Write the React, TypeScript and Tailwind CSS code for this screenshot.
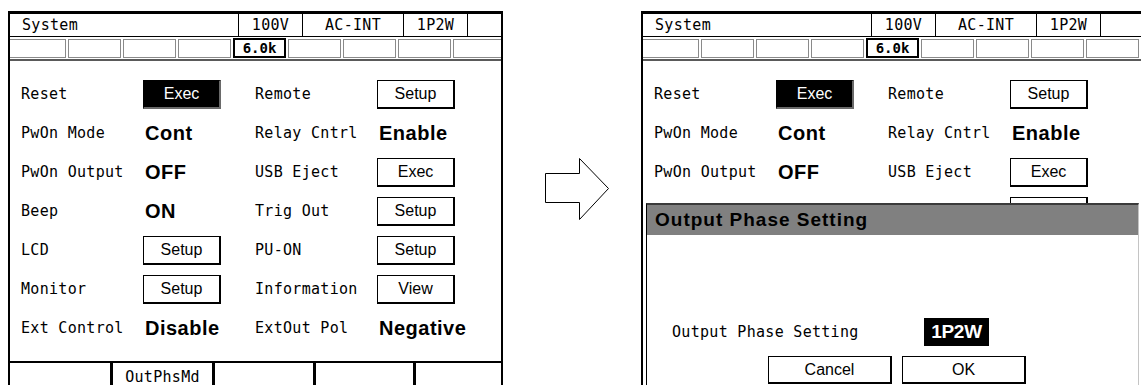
import React from "react";

const mono = "font-['DejaVu_Sans_Mono','Liberation_Mono',monospace] text-[15px] tracking-[0.3px] text-black";
const sans = "font-['Liberation_Sans',Arial,sans-serif]";

type Cell =
  | { kind: "val"; text: string }
  | { kind: "btn"; text: string; dark?: boolean };

const rows: { l: string; lv: Cell; r: string; rv: Cell }[] = [
  { l: "Reset", lv: { kind: "btn", text: "Exec", dark: true }, r: "Remote", rv: { kind: "btn", text: "Setup" } },
  { l: "PwOn Mode", lv: { kind: "val", text: "Cont" }, r: "Relay Cntrl", rv: { kind: "val", text: "Enable" } },
  { l: "PwOn Output", lv: { kind: "val", text: "OFF" }, r: "USB Eject", rv: { kind: "btn", text: "Exec" } },
  { l: "Beep", lv: { kind: "val", text: "ON" }, r: "Trig Out", rv: { kind: "btn", text: "Setup" } },
  { l: "LCD", lv: { kind: "btn", text: "Setup" }, r: "PU-ON", rv: { kind: "btn", text: "Setup" } },
  { l: "Monitor", lv: { kind: "btn", text: "Setup" }, r: "Information", rv: { kind: "btn", text: "View" } },
  { l: "Ext Control", lv: { kind: "val", text: "Disable" }, r: "ExtOut Pol", rv: { kind: "val", text: "Negative" } },
];

function Value({ c, hideText }: { c: Cell; hideText?: boolean }) {
  const t = hideText ? "" : c.text;
  if (c.kind === "val") {
    return (
      <span className={`${sans} pl-[2px] text-[20px] font-bold leading-none tracking-[0.5px] text-black`}>
        {t}
      </span>
    );
  }
  if (c.dark) {
    return (
      <div
        className={`${sans} flex h-[29px] w-[78px] items-center justify-center border border-black border-r-2 border-b-2 border-r-[#6a6a6a] border-b-[#6a6a6a] bg-black text-[16px] text-white`}
      >
        {t}
      </div>
    );
  }
  return (
    <div
      className={`${sans} flex h-[29px] w-[78px] items-center justify-center border border-r-2 border-b-2 border-black bg-white text-[16px] text-black`}
    >
      {t}
    </div>
  );
}

function Screen({ dialog, withRightBorder }: { dialog?: boolean; withRightBorder?: boolean }) {
  const subCells = Array.from({ length: 9 });
  const visibleRows = dialog ? rows.slice(0, 4) : rows;
  return (
    <div
      className={`relative h-[380px] w-full overflow-hidden border-l-2 border-t-[3px] border-black bg-white ${
        withRightBorder ? "border-r-2" : ""
      }`}
    >
      {/* header row 1 */}
      <div className={`${mono} flex h-[23px] items-center border-b border-black`}>
        <div className="w-[228px] shrink-0 pl-[12px]">System</div>
        <div className="flex h-full w-[64px] shrink-0 items-center justify-center border-l border-black">100V</div>
        <div className="flex h-full w-[101px] shrink-0 items-center justify-center border-l border-black">AC-INT</div>
        <div className="flex h-full w-[64px] shrink-0 items-center justify-center border-l border-black">1P2W</div>
        <div className="h-full flex-1 border-l border-black" />
      </div>
      {/* header row 2 */}
      <div className="flex h-[24px] items-center gap-[2px] border-b-2 border-[#5a5a5a]">
        {subCells.map((_, i) =>
          i === 4 ? (
            <div
              key={i}
              className="flex h-[20px] w-[53px] shrink-0 items-center justify-center border-2 border-black font-['DejaVu_Sans_Mono','Liberation_Mono',monospace] text-[14px] font-bold leading-none text-black"
            >
              6.0k
            </div>
          ) : (
            <div
              key={i}
              className={`h-[19px] shrink-0 border border-[#8a8a8a] ${i === 0 ? "w-[56px] border-l-0" : "w-[53px]"}`}
            />
          )
        )}
      </div>
      {/* content */}
      <div className="h-[300px] pt-[14px]">
        {visibleRows.map((r, i) => {
          const covered = dialog && i === 3;
          return (
            <div key={r.l} className="grid h-[39px] grid-cols-[133px_112px_122px_1fr] items-center">
              <div className={`${mono} pl-[11px]`}>{covered ? "" : r.l}</div>
              <div>
                <Value c={r.lv} hideText={covered} />
              </div>
              <div className={mono}>{covered ? "" : r.r}</div>
              <div>
                <Value c={r.rv} hideText={covered} />
              </div>
            </div>
          );
        })}
      </div>
      {/* bottom row */}
      {!dialog && (
        <div className="flex h-[40px] border-t-2 border-black">
          <div className="w-[100px] shrink-0" />
          <div className={`${mono} flex w-[102px] shrink-0 justify-center border-l-[3px] border-black pt-[3px]`}>
            OutPhsMd
          </div>
          <div className="w-[101px] shrink-0 border-l-[3px] border-black" />
          <div className="w-[100px] shrink-0 border-l-[3px] border-black" />
          <div className="flex-1 border-l-[3px] border-black" />
        </div>
      )}

      {dialog && (
        <div className="absolute left-[3px] top-[189px] h-[200px] w-[493px] border-l border-t-2 border-r border-l-black border-t-[#3a3a3a] border-r-[#c4c4c4] bg-white">
          <div className={`${sans} flex h-[30px] items-center bg-[#808080] pl-[8px] text-[19px] font-bold tracking-[1px] text-black`}>
            Output Phase Setting
          </div>
          <div className="pt-[83px]">
            <div className="flex h-[28px] items-center">
              <div className={`${mono} w-[277px] shrink-0 pl-[25px]`}>Output Phase Setting</div>
              <div
                className={`${sans} flex h-[28px] w-[65px] items-center justify-center bg-black text-[19px] font-bold tracking-[-0.3px] text-white`}
              >
                1P2W
              </div>
            </div>
            <div className="mt-[10px] flex gap-[10px] pl-[121px]">
              <div
                className={`${sans} flex h-[28px] w-[124px] items-center justify-center border border-r-2 border-b-2 border-black text-[16px] text-black`}
              >
                Cancel
              </div>
              <div
                className={`${sans} flex h-[28px] w-[124px] items-center justify-center border border-r-2 border-b-2 border-black text-[16px] text-black`}
              >
                OK
              </div>
            </div>
          </div>
        </div>
      )}
    </div>
  );
}

export default function App() {
  return (
    <div className="flex h-[385px] w-[1141px] overflow-hidden bg-white pl-[8px] pt-[11px]">
      <div className="w-[495px] shrink-0">
        <Screen withRightBorder />
      </div>
      <div className="w-[138px] shrink-0">
        <svg width="138" height="240" viewBox="0 0 138 240" className="block">
          <polygon
            points="42.5,162.5 76.5,162.5 76.5,147.5 105.5,177.5 76.5,208.5 76.5,191.5 42.5,191.5"
            fill="white"
            stroke="black"
            strokeWidth="1"
          />
        </svg>
      </div>
      <div className="w-[500px] shrink-0">
        <Screen dialog />
      </div>
    </div>
  );
}
